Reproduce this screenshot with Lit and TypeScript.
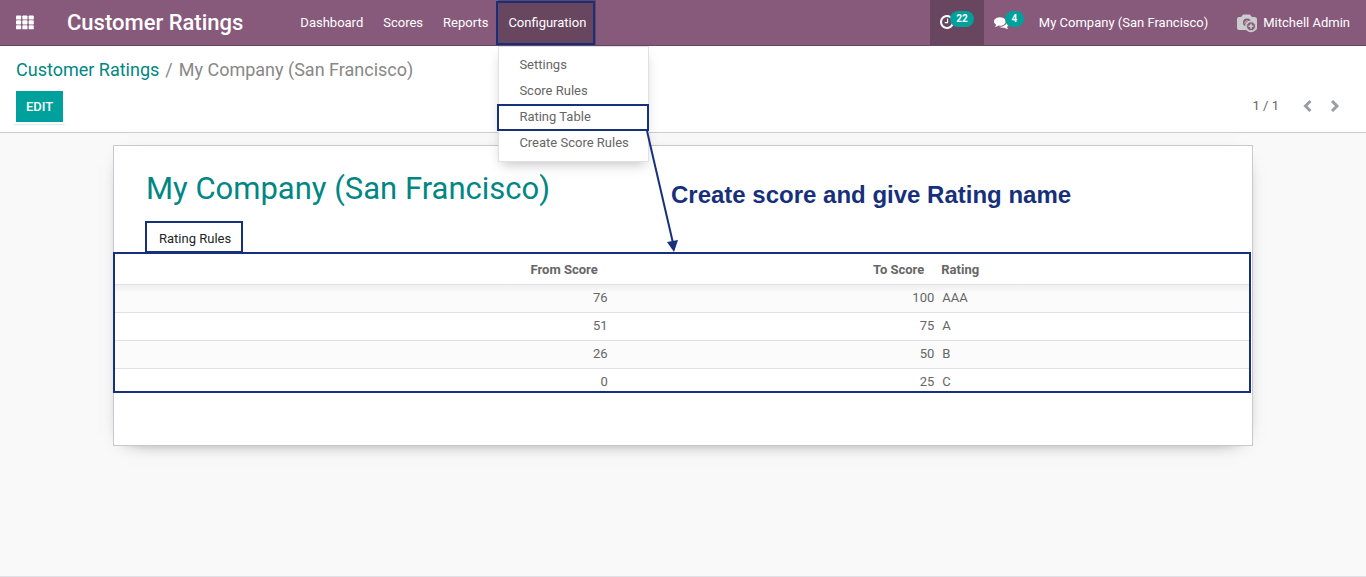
import { LitElement, html, css, svg } from "lit";
import { customElement } from "lit/decorators.js";

const CLOCK =
  "M1024 544v448q0 14-9 23t-23 9h-320q-14 0-23-9t-9-23v-64q0-14 9-23t23-9h224v-352q0-14 9-23t23-9h64q14 0 23 9t9 23zm416 352q0-148-73-273t-198-198-273-73-273 73-198 198-73 273 73 273 198 198 273 73 273-73 198-198 73-273zm224 0q0 209-103 385.5t-279.5 279.5-385.5 103-385.5-103-279.5-279.5-103-385.5 103-385.5 279.5-279.5 385.5-103 385.5 103 279.5 279.5 103 385.5z";
const COMMENTS =
  "M1408 768q0 139-94 257t-256.5 186.5-353.5 68.5q-86 0-176-16-124 88-278 128-36 9-86 16h-3q-11 0-20.5-8t-11.5-21q-1-3-1-6.5t.5-6.5 2-6l2.5-5 3.5-5.5 4-5 4.5-5 4-4.5q5-6 23-25t26-29.5 22.5-29 25-38.5 20.5-44q-124-72-195-177t-71-224q0-139 94-257t256.5-186.5 353.5-68.5 353.5 68.5 256.5 186.5 94 257zm384 256q0 120-71 224.5t-195 176.5q10 24 20.5 44t25 38.5 22.5 29 26 29.5 23 25q1 1 4 4.5t4.5 5 4 5 3.5 5.5l2.5 5 2 6 .5 6.5-1 6.5q-3 14-13 22t-22 7q-50-7-86-16-154-40-278-128-90 16-176 16-271 0-472-132 58 4 88 4 161 0 309-45t264-129q125-92 192-212t67-254q0-77-23-152 129 71 204 178t75 230z";

const base = css`
  *,
  *::before,
  *::after {
    box-sizing: border-box;
  }
  a {
    color: inherit;
    text-decoration: none;
  }
  button {
    font: inherit;
    color: inherit;
    background: none;
    border: 0;
    padding: 0;
    margin: 0;
    cursor: pointer;
  }
  svg {
    display: block;
  }
`;

@customElement("main-navbar")
export class MainNavbar extends LitElement {
  static styles = [
    base,
    css`
      :host {
        display: block;
        color: #fff;
      }
      .bar {
        display: flex;
        align-items: stretch;
        height: 46px;
        background: #875a7b;
        border-bottom: 1px solid #68465f;
        padding-right: 6px;
      }
      .apps {
        display: flex;
        align-items: center;
        padding: 0 16px;
      }
      .brand {
        font-size: 22px;
        font-weight: 500;
        line-height: 45px;
        padding: 0 17px;
        margin-right: 30px;
        white-space: nowrap;
      }
      .sections {
        display: flex;
        margin-right: auto;
      }
      .entry {
        position: relative;
        z-index: 2;
      }
      .link {
        display: flex;
        align-items: center;
        height: 45px;
        padding: 0 10px;
        white-space: nowrap;
      }
      .open {
        background: #68465f;
      }
      .open::after,
      .marked::after {
        content: "";
        position: absolute;
        border: 2px solid #17307c;
        pointer-events: none;
      }
      .open::after {
        inset: 1px 1px 0 -2px;
      }
      .menu {
        position: absolute;
        top: 46px;
        left: 0;
        width: 151px;
        background: #fff;
        border: 1px solid #dee2e6;
        padding: 5px 0;
        color: #666;
        box-shadow: 0 6px 12px -4px rgba(0, 0, 0, 0.25);
      }
      .item {
        display: block;
        position: relative;
        padding: 0 20px;
        line-height: 26px;
        white-space: nowrap;
      }
      .marked::after {
        inset: 0 -1px -1px -2px;
      }
      .arrow {
        position: absolute;
        top: 26px;
        left: 146px;
        pointer-events: none;
      }
      .tray {
        display: flex;
      }
      .notice {
        padding-bottom: 1px;
      }
      .active {
        background: #68465f;
      }
      .badge {
        font-size: 10px;
        font-weight: 700;
        line-height: 16px;
        min-width: 19px;
        text-align: center;
        background: #00a09d;
        border-radius: 8px;
        padding: 0 6px;
        margin: 0 0 6px -4px;
      }
      .company {
        padding-left: 5px;
      }
      .user {
        gap: 5px;
        margin-left: 8px;
      }
    `,
  ];

  render() {
    const cells = [0, 1, 2].flatMap((r) =>
      [0, 1, 2].map((c) => svg`<rect x=${c * 6.5} y=${r * 5} width="5.3" height="4.2" rx="0.9" />`)
    );
    return html`
      <nav class="bar">
        <button class="apps" aria-label="Applications">
          <svg width="18" height="15" viewBox="0 0 18.5 14.4" fill="#fff">${cells}</svg>
        </button>
        <a class="brand" href="#">Customer Ratings</a>
        <div class="sections">
          <div class="entry"><a class="link" href="#">Dashboard</a></div>
          <div class="entry"><a class="link" href="#">Scores</a></div>
          <div class="entry"><a class="link" href="#">Reports</a></div>
          <div class="entry">
            <button class="link open" aria-expanded="true">Configuration</button>
            <div class="menu">
              <a class="item" href="#">Settings</a>
              <a class="item" href="#">Score Rules</a>
              <a class="item marked" href="#"
                >Rating Table
                <svg class="arrow" width="36" height="124" viewBox="0 0 36 124" aria-hidden="true">
                  <path d="M2 1L28 113" stroke="#17307c" stroke-width="2" />
                  <path d="M22 112L33 110L29 122Z" fill="#17307c" />
                </svg>
              </a>
              <a class="item" href="#">Create Score Rules</a>
            </div>
          </div>
        </div>
        <div class="tray">
          <button class="link notice active" aria-label="Activities">
            <svg width="14" height="14" viewBox="128 128 1536 1536" fill="#fff"><path d=${CLOCK} /></svg>
            <span class="badge">22</span>
          </button>
          <button class="link notice" aria-label="Messages">
            <svg width="15" height="15" viewBox="0 0 1792 1792" fill="#fff"><path d=${COMMENTS} /></svg>
            <span class="badge">4</span>
          </button>
          <button class="link company">My Company (San Francisco)</button>
          <button class="link user">
            <svg width="22" height="20" viewBox="0 0 22 20">
              <path
                d="M3 4H5L7 1.700Q7.300 1.500 7.700 1.500H13.300Q13.700 1.500 14 1.700L16 4H18.500Q21 4 21 6.500V15Q21 17 19 17H3Q1 17 1 15V6Q1 4 3 4Z"
                fill="#ccc"
              />
              <circle cx="11" cy="9.500" r="4" fill="#875a7b" />
              <path d="M8.800 10.500Q8.800 8 11.500 7.500" stroke="#ccc" fill="none" />
              <circle cx="15" cy="13.300" r="6" fill="#ccc" />
              <circle cx="15" cy="13.300" r="4.500" fill="#875a7b" stroke="#ccc" stroke-width="1" />
              <path d="M15 10.800V15.800M12.500 13.300H17.500" stroke="#ccc" stroke-width="1.600" />
            </svg>
            Mitchell Admin
          </button>
        </div>
      </nav>
    `;
  }
}

@customElement("control-panel")
export class ControlPanel extends LitElement {
  static styles = [
    base,
    css`
      :host {
        display: block;
        background: #fff;
        border-bottom: 1px solid #ccc;
        padding: 10px 16px 8px;
      }
      .crumbs {
        display: flex;
        gap: 6px;
        font-size: 18px;
        line-height: 28px;
        color: #888;
      }
      .crumbs a {
        color: #008784;
      }
      .actions {
        display: flex;
        justify-content: space-between;
        align-items: center;
        margin-top: 7px;
      }
      .edit {
        background: #00a09d;
        color: #fff;
        font-weight: 500;
        line-height: 31px;
        padding: 0 10px;
        margin-bottom: 2px;
        box-shadow: 0 0 0 2px #fff, 0 1px 0 2px #d5efee;
      }
      .pager {
        display: flex;
        align-items: center;
        padding: 0 10px 4px 0;
      }
      .count {
        margin-right: 24px;
      }
      .step + .step {
        margin-left: 17px;
      }
    `,
  ];

  render() {
    return html`
      <div class="crumbs">
        <a href="#">Customer Ratings</a><span>/</span><span>My Company (San Francisco)</span>
      </div>
      <div class="actions">
        <button class="edit">EDIT</button>
        <div class="pager">
          <span class="count">1 / 1</span>
          <button class="step" aria-label="Previous">
            <svg width="10" height="12" viewBox="0 0 10 12" fill="none" stroke="#999fa5" stroke-width="3">
              <path d="M7.500 1L2.500 6L7.500 11" />
            </svg>
          </button>
          <button class="step" aria-label="Next">
            <svg width="10" height="12" viewBox="0 0 10 12" fill="none" stroke="#999fa5" stroke-width="3">
              <path d="M2 1L7 6L2 11" />
            </svg>
          </button>
        </div>
      </div>
    `;
  }
}

@customElement("rating-sheet")
export class RatingSheet extends LitElement {
  static styles = [
    base,
    css`
      :host {
        display: block;
        max-width: 1140px;
        margin: 0 auto;
        background: #fff;
        border: 1px solid #c8c8d3;
        box-shadow: 0 5px 20px -15px #000;
        padding-bottom: 52px;
      }
      .head {
        display: flex;
        align-items: center;
        gap: 121px;
        padding: 23px 32px 0;
        white-space: nowrap;
      }
      h1 {
        margin: 0;
        font-size: 31px;
        font-weight: 400;
        line-height: 40px;
        color: #008784;
      }
      .note {
        margin: 0;
        padding-top: 12px;
        font: 700 24px/28px "Liberation Sans", sans-serif;
        color: #17307c;
      }
      .tabs {
        display: flex;
        padding: 12px 31px 0;
      }
      .tab {
        border: 2px solid #17307c;
        border-bottom-width: 1px;
        line-height: 24px;
        padding: 4px 10px 0 12px;
        color: #212529;
      }
      .frame {
        border: 2px solid #17307c;
        margin: 0 1px 0 -1px;
        height: 141px;
        overflow: hidden;
      }
      table {
        width: 100%;
        table-layout: fixed;
        border-collapse: separate;
        border-spacing: 0;
      }
      .from {
        width: 43.8%;
      }
      .to {
        width: 28.8%;
      }
      th,
      td {
        text-align: left;
        border-bottom: 1px solid #dee2e6;
      }
      th {
        height: 31px;
        padding: 2px 3px 0;
        font-weight: 700;
      }
      td {
        height: 28px;
        padding: 0 4px 1px;
      }
      .num {
        text-align: right;
      }
      th.num {
        padding-right: 14px;
      }
      tbody tr:nth-child(odd) {
        background: #fbfbfb;
      }
      tbody tr:first-child {
        background: linear-gradient(#f0f0f0, #fbfbfb 8px);
      }
    `,
  ];

  private rules = [
    { from: 76, to: 100, rating: "AAA" },
    { from: 51, to: 75, rating: "A" },
    { from: 26, to: 50, rating: "B" },
    { from: 0, to: 25, rating: "C" },
  ];

  render() {
    return html`
      <div class="head">
        <h1>My Company (San Francisco)</h1>
        <p class="note">Create score and give Rating name</p>
      </div>
      <div class="tabs"><button class="tab">Rating Rules</button></div>
      <div class="frame">
        <table>
          <thead>
            <tr>
              <th class="num from">From Score</th>
              <th class="num to">To Score</th>
              <th>Rating</th>
            </tr>
          </thead>
          <tbody>
            ${this.rules.map(
              (r) => html`<tr>
                <td class="num">${r.from}</td>
                <td class="num">${r.to}</td>
                <td>${r.rating}</td>
              </tr>`
            )}
          </tbody>
        </table>
      </div>
    `;
  }
}

@customElement("app-root")
export class AppRoot extends LitElement {
  static styles = [
    base,
    css`
      :host {
        display: flex;
        flex-direction: column;
        min-height: 100vh;
        box-sizing: border-box;
        font: 13px/20px Roboto, sans-serif;
        color: #666;
        background: #f9f9f9;
      }
      .content {
        flex: 1;
        padding: 12px 16px;
        border-bottom: 1px solid #dee2e6;
      }
    `,
  ];

  render() {
    return html`
      <main-navbar></main-navbar>
      <control-panel></control-panel>
      <main class="content"><rating-sheet></rating-sheet></main>
    `;
  }
}
